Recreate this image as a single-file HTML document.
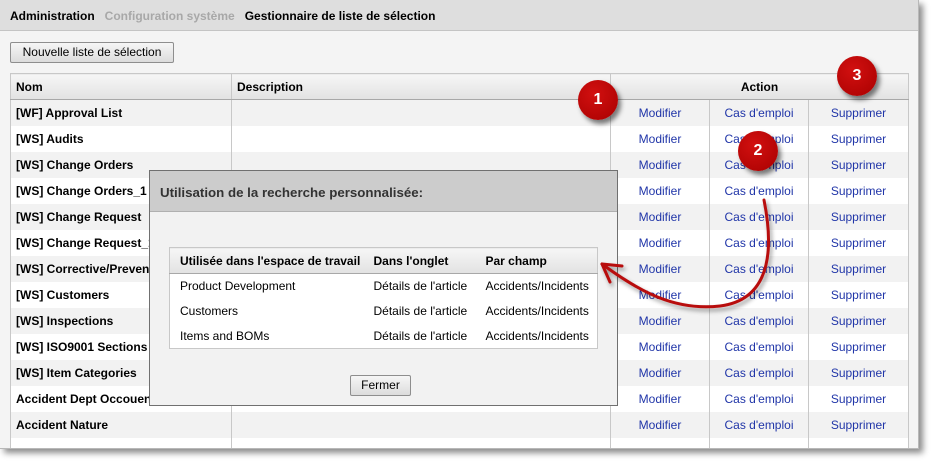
<!DOCTYPE html>
<html><head><style>
*{margin:0;padding:0;box-sizing:border-box}
body{width:933px;height:463px;background:#fff;font-family:"Liberation Sans",Arial,sans-serif;font-size:12px;position:relative;overflow:hidden}
#frame{position:absolute;left:0;top:0;width:919px;height:449px;background:#f4f4f4;border-right:1px solid #b8b8b8;border-bottom:1px solid #b8b8b8;box-shadow:4px 4px 6px rgba(0,0,0,.45);overflow:hidden}
#hdr{height:31px;background:#dedede;border-bottom:1px solid #c4c4c4;padding:9px 10px;font-weight:bold;font-size:12px}
#hdr span{margin-right:10px}
.btn{position:absolute;border:1px solid #8e8e8e;border-radius:2px;background:linear-gradient(#f6f6f6,#dcdcdc);font-size:12px;text-align:center}
table{border-collapse:collapse}
#main{position:absolute;left:10px;top:73px;width:899px;border:1px solid #c8c8c8}
#main th{height:26px;background:linear-gradient(#f6f6f6,#e2e2e2);border-right:1px solid #c8c8c8;border-bottom:1px solid #a8a8a8;text-align:left;padding-left:5px;font-size:12px}
#main td{height:26px;border-right:1px solid #c8c8c8;padding-left:5px;font-weight:bold;white-space:nowrap;overflow:hidden}
#main tr:nth-child(even) td{background:#f2f2f2}
#main tr:nth-child(odd) td{background:#fff}
#main td.a{color:#2035a8;font-weight:normal;text-align:center;padding:0}
#dlg{position:absolute;left:149px;top:170px;width:469px;height:236px;background:#f2f2f2;border:1px solid #707070}
#dlg .t{height:41px;background:#cccccc;border-bottom:1px solid #b0b0b0;font-weight:bold;font-size:13.3px;color:#333;padding:14px 0 0 10px}
#inner{position:absolute;left:19px;top:76px;width:429px;border:1px solid #c8c8c8;background:#fff}
#inner th{height:26px;background:linear-gradient(#f6f6f6,#e2e2e2);border-bottom:1px solid #a8a8a8;text-align:left;padding-left:10px;font-size:12px}
#inner td{height:25px;padding-left:10px;font-size:12px}
.c{position:absolute;width:40px;height:40px;border-radius:50%;background:radial-gradient(circle at 40% 35%,#d21010,#a80000);color:#fff;font-weight:bold;font-size:16px;text-align:center;line-height:40px;box-shadow:3px 4px 5px rgba(0,0,0,.5)}
</style></head><body>
<div id="frame">
<div id="hdr"><span>Administration</span><span style="color:#a8a8a8">Configuration système</span><span>Gestionnaire de liste de sélection</span></div>
<div class="btn" style="left:10px;top:42px;width:164px;height:21px;line-height:19px">Nouvelle liste de sélection</div>
<table id="main">
<tr><th style="width:221px">Nom</th><th style="width:379px">Description</th><th colspan="3" style="text-align:center;padding:0">Action</th></tr>
<tr><td>[WF] Approval List</td><td></td><td class="a" style="width:99px">Modifier</td><td class="a" style="width:99px">Cas d'emploi</td><td class="a" style="border-right:0">Supprimer</td></tr>
<tr><td>[WS] Audits</td><td></td><td class="a">Modifier</td><td class="a">Cas d'emploi</td><td class="a">Supprimer</td></tr>
<tr><td>[WS] Change Orders</td><td></td><td class="a">Modifier</td><td class="a">Cas d'emploi</td><td class="a">Supprimer</td></tr>
<tr><td>[WS] Change Orders_1</td><td></td><td class="a">Modifier</td><td class="a">Cas d'emploi</td><td class="a">Supprimer</td></tr>
<tr><td>[WS] Change Request</td><td></td><td class="a">Modifier</td><td class="a">Cas d'emploi</td><td class="a">Supprimer</td></tr>
<tr><td>[WS] Change Request_1</td><td></td><td class="a">Modifier</td><td class="a">Cas d'emploi</td><td class="a">Supprimer</td></tr>
<tr><td>[WS] Corrective/Preventive</td><td></td><td class="a">Modifier</td><td class="a">Cas d'emploi</td><td class="a">Supprimer</td></tr>
<tr><td>[WS] Customers</td><td></td><td class="a">Modifier</td><td class="a">Cas d'emploi</td><td class="a">Supprimer</td></tr>
<tr><td>[WS] Inspections</td><td></td><td class="a">Modifier</td><td class="a">Cas d'emploi</td><td class="a">Supprimer</td></tr>
<tr><td>[WS] ISO9001 Sections</td><td></td><td class="a">Modifier</td><td class="a">Cas d'emploi</td><td class="a">Supprimer</td></tr>
<tr><td>[WS] Item Categories</td><td></td><td class="a">Modifier</td><td class="a">Cas d'emploi</td><td class="a">Supprimer</td></tr>
<tr><td>Accident Dept Occouence</td><td></td><td class="a">Modifier</td><td class="a">Cas d'emploi</td><td class="a">Supprimer</td></tr>
<tr><td>Accident Nature</td><td></td><td class="a">Modifier</td><td class="a">Cas d'emploi</td><td class="a">Supprimer</td></tr>
<tr><td></td><td></td><td class="a"></td><td class="a"></td><td class="a"></td></tr>
</table>
<div id="dlg">
<div class="t">Utilisation de la recherche personnalisée:</div>
<table id="inner">
<tr><th style="width:194px">Utilisée dans l'espace de travail</th><th style="width:112px">Dans l'onglet</th><th>Par champ</th></tr>
<tr><td>Product Development</td><td>Détails de l'article</td><td>Accidents/Incidents</td></tr>
<tr><td>Customers</td><td>Détails de l'article</td><td>Accidents/Incidents</td></tr>
<tr><td>Items and BOMs</td><td>Détails de l'article</td><td>Accidents/Incidents</td></tr>
</table>
<div class="btn" style="left:200px;top:204px;width:61px;height:21px;line-height:19px">Fermer</div>
</div>
</div>
<svg style="position:absolute;left:0;top:0" width="933" height="463">
<defs><filter id="s"><feDropShadow dx="2" dy="3" stdDeviation="2" flood-opacity="0.4"/></filter></defs>
<g filter="url(#s)" fill="none" stroke="#b80c0c" stroke-width="3" stroke-linecap="round">
<path d="M764,200 C775,255 768,300 720,306 C675,311 640,292 602,264"/>
<path d="M602,264 L622,266 M602,264 L610,282"/>
</g>
</svg>
<div class="c" style="left:578px;top:80px">1</div>
<div class="c" style="left:738px;top:131px">2</div>
<div class="c" style="left:837px;top:56px">3</div>
</body></html>
